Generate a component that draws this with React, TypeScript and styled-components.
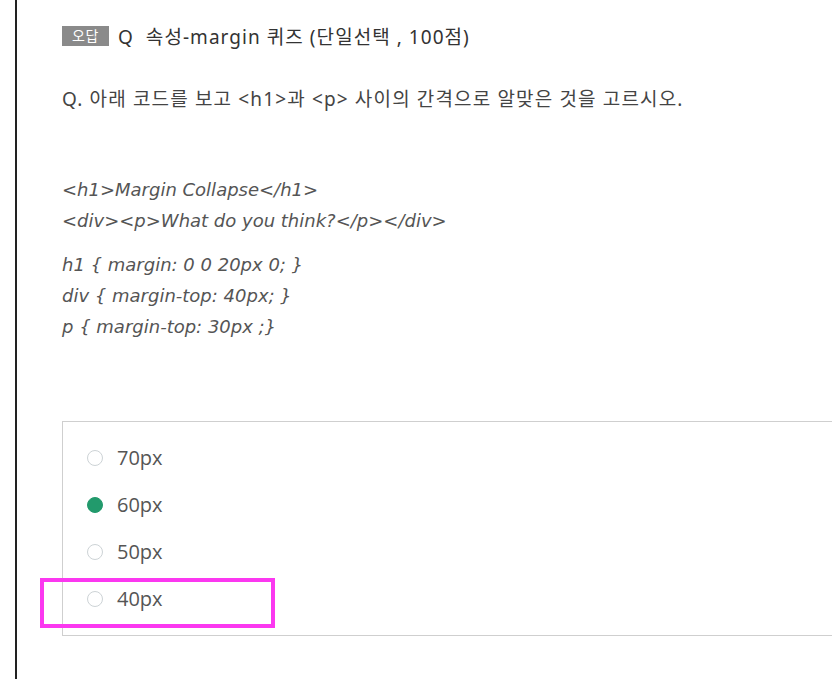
import React from "react";
import styled, { createGlobalStyle } from "styled-components";

const Global = createGlobalStyle`
  html, body { margin: 0; padding: 0; background: #fff; }
  body { font-family: "Noto Sans", "Noto Sans CJK KR", sans-serif; }
`;

const Page = styled.div`
  width: 832px;
  height: 679px;
  overflow: hidden;
  padding-left: 15px;
  box-sizing: border-box;
`;

const Column = styled.div`
  border-left: 2px solid #222;
  height: 100%;
  padding: 20px 0 0 45px;
  box-sizing: border-box;
`;

const TitleRow = styled.div`
  display: flex;
  align-items: center;
  height: 32px;
  gap: 9px;
  color: #333;
  font-size: 19px;
  letter-spacing: 1.05px;
  font-family: "Noto Sans", "Noto Sans CJK KR", sans-serif;
`;

const Badge = styled.span`
  display: inline-flex;
  align-items: center;
  justify-content: center;
  width: 47px;
  height: 20px;
  background: #8a8a8a;
  color: #fff;
  font-size: 14px;
  letter-spacing: 0.5px;
  line-height: 1;
`;

const Question = styled.p`
  margin: 32px 0 0;
  font-size: 19px;
  line-height: 30px;
  letter-spacing: 1.15px;
  color: #444;
`;

const Code = styled.div`
  margin-top: 60px;
  font-family: "DejaVu Sans", "Noto Sans CJK KR", sans-serif;
  font-style: italic;
  font-weight: 300;
  font-size: 18px;
  color: #555;
  line-height: 31px;
`;

const CodeBlock = styled.div`
  & + & { margin-top: 13px; }
`;

const Options = styled.div`
  margin-top: 79px;
  border: 1px solid #cfcfcf;
  border-right: none;
  height: 215px;
  box-sizing: border-box;
  padding: 12px 0 0 24px;
  display: flex;
  flex-direction: column;
  position: relative;
`;

const Option = styled.label`
  display: flex;
  align-items: center;
  gap: 14px;
  height: 47px;
  font-family: "Open Sans", sans-serif;
  font-size: 20px;
  color: #555;
`;

const Radio = styled.span<{ $checked?: boolean }>`
  width: 16px;
  height: 16px;
  border-radius: 50%;
  box-sizing: border-box;
  border: 1px solid ${(p) => (p.$checked ? "#229a6c" : "#cdd3d6")};
  background: ${(p) => (p.$checked ? "#229a6c" : "#fff")};
`;

const Highlight = styled.div`
  position: absolute;
  left: -23px;
  top: 156px;
  width: 227px;
  height: 42px;
  border: 4px solid #fb38f0;
`;

const options = [
  { label: "70px", checked: false },
  { label: "60px", checked: true },
  { label: "50px", checked: false },
  { label: "40px", checked: false },
];

export default function App() {
  return (
    <Page>
      <Global />
      <Column>
        <TitleRow>
          <Badge>오답</Badge>
          <span>Q&nbsp; 속성-margin 퀴즈 (단일선택 , 100점)</span>
        </TitleRow>
        <Question>Q. 아래 코드를 보고 &lt;h1&gt;과 &lt;p&gt; 사이의 간격으로 알맞은 것을 고르시오.</Question>
        <Code>
          <CodeBlock>
            <div>&lt;h1&gt;Margin Collapse&lt;/h1&gt;</div>
            <div>&lt;div&gt;&lt;p&gt;What do you think?&lt;/p&gt;&lt;/div&gt;</div>
          </CodeBlock>
          <CodeBlock>
            <div>h1 {"{"} margin: 0 0 20px 0; {"}"}</div>
            <div>div {"{"} margin-top: 40px; {"}"}</div>
            <div>p {"{"} margin-top: 30px ;{"}"}</div>
          </CodeBlock>
        </Code>
        <Options>
          {options.map((o) => (
            <Option key={o.label}>
              <Radio $checked={o.checked} />
              {o.label}
            </Option>
          ))}
          <Highlight />
        </Options>
      </Column>
    </Page>
  );
}
